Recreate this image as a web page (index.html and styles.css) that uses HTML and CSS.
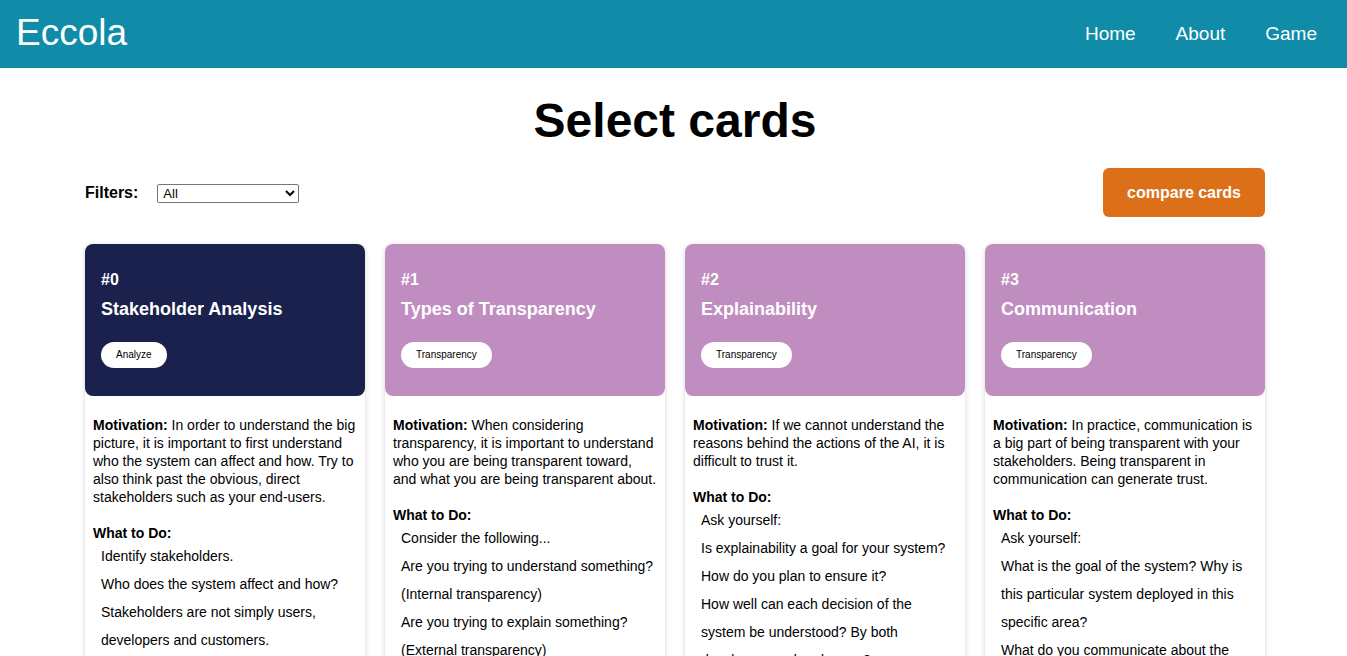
FILE: index.html
```html
<!DOCTYPE html>
<html lang="en">
<head>
<meta charset="utf-8">
<title>Eccola</title>
<link rel="stylesheet" href="styles.css">
</head>
<body>
<header class="topbar">
  <div class="logo">Eccola</div>
  <nav class="nav">
    <a href="#">Home</a>
    <a href="#">About</a>
    <a href="#">Game</a>
  </nav>
</header>
<main class="page">
  <h1 class="title">Select cards</h1>
  <div class="toolbar">
    <div class="filters">
      <label class="filters-label" for="f">Filters:</label>
      <select id="f" class="filter-select">
        <option>All</option>
        <option>Analyze</option>
        <option>Transparency</option>
      </select>
    </div>
    <button class="compare-btn">compare cards</button>
  </div>
  <div class="cards">
    <div class="card">
      <div class="card-head head-analyze">
        <div class="card-num">#0</div>
        <div class="card-title">Stakeholder Analysis</div>
        <span class="tag">Analyze</span>
      </div>
      <div class="card-body">
        <p class="motivation"><b>Motivation:</b> In order to understand the big picture, it is important to first understand who the system can affect and how. Try to also think past the obvious, direct stakeholders such as your end-users.</p>
        <div class="todo-title">What to Do:</div>
        <ul class="todo">
          <li>Identify stakeholders.</li>
          <li>Who does the system affect and how?</li>
          <li>Stakeholders are not simply users, developers and customers.</li>
          <li>Consider also indirect stakeholders.</li>
        </ul>
      </div>
    </div>
    <div class="card">
      <div class="card-head head-transparency">
        <div class="card-num">#1</div>
        <div class="card-title">Types of Transparency</div>
        <span class="tag">Transparency</span>
      </div>
      <div class="card-body">
        <p class="motivation"><b>Motivation:</b> When considering transparency, it is important to understand who you are being transparent toward, and what you are being transparent about.</p>
        <div class="todo-title">What to Do:</div>
        <ul class="todo">
          <li>Consider the following...</li>
          <li>Are you trying to understand something?</li>
          <li>(Internal transparency)</li>
          <li>Are you trying to explain something?</li>
          <li>(External transparency)</li>
        </ul>
      </div>
    </div>
    <div class="card">
      <div class="card-head head-transparency">
        <div class="card-num">#2</div>
        <div class="card-title">Explainability</div>
        <span class="tag">Transparency</span>
      </div>
      <div class="card-body">
        <p class="motivation"><b>Motivation:</b> If we cannot understand the reasons behind the actions of the AI, it is difficult to trust it.</p>
        <div class="todo-title">What to Do:</div>
        <ul class="todo">
          <li>Ask yourself:</li>
          <li>Is explainability a goal for your system?</li>
          <li>How do you plan to ensure it?</li>
          <li>How well can each decision of the system be understood? By both developers and end-users?</li>
        </ul>
      </div>
    </div>
    <div class="card">
      <div class="card-head head-transparency">
        <div class="card-num">#3</div>
        <div class="card-title">Communication</div>
        <span class="tag">Transparency</span>
      </div>
      <div class="card-body">
        <p class="motivation"><b>Motivation:</b> In practice, communication is a big part of being transparent with your stakeholders. Being transparent in communication can generate trust.</p>
        <div class="todo-title">What to Do:</div>
        <ul class="todo">
          <li>Ask yourself:</li>
          <li>What is the goal of the system? Why is this particular system deployed in this specific area?</li>
          <li>What do you communicate about the system to its users?</li>
        </ul>
      </div>
    </div>
  </div>
</main>
</body>
</html>
```
FILE: styles.css
```css
* { box-sizing: border-box; }
html, body { margin: 0; padding: 0; }
body {
  font-family: "Liberation Sans", Arial, sans-serif;
  color: #000;
  background: #fff;
}
.topbar {
  height: 68px;
  background: #108ca9;
  display: flex;
  align-items: center;
  justify-content: space-between;
  padding: 0 30px 0 16px;
  color: #fff;
}
.logo {
  font-size: 37px;
  line-height: 42px;
  margin-top: -2px;
}
.nav {
  display: flex;
  gap: 40px;
}
.nav a {
  color: #fff;
  text-decoration: none;
  font-size: 19px;
}
.page {
  padding: 0 82px 0 85px;
}
.title {
  margin: 25px 0 0;
  text-align: center;
  font-size: 48px;
  line-height: 56px;
  font-weight: bold;
}
.toolbar {
  margin-top: 19px;
  display: flex;
  justify-content: space-between;
  align-items: center;
}
.filters {
  display: flex;
  align-items: center;
  gap: 19px;
}
.filters-label {
  font-weight: bold;
  font-size: 16px;
}
.filter-select {
  width: 142px;
  height: 19px;
  font-family: "Liberation Sans", Arial, sans-serif;
  font-size: 13px;
  padding: 0 0 0 1px;
  border: 1px solid #767676;
  border-radius: 2px;
  background: #fff;
  margin-top: 2px;
}
.compare-btn {
  width: 162px;
  height: 49px;
  background: #dc7019;
  color: #fff;
  border: none;
  border-radius: 6px;
  font-family: "Liberation Sans", Arial, sans-serif;
  font-weight: bold;
  font-size: 16px;
}
.cards {
  margin-top: 27px;
  display: grid;
  grid-template-columns: repeat(4, 280px);
  gap: 20px;
}
.card {
  border-radius: 8px;
  background: #fff;
  box-shadow: 0 1px 5px rgba(0, 0, 0, 0.18);
}
.card-head {
  height: 152px;
  border-radius: 8px;
  padding: 27px 16px 0;
  color: #fff;
}
.head-analyze { background: #1b214d; }
.head-transparency { background: #c08dc1; }
.card-num {
  font-weight: bold;
  font-size: 16px;
  line-height: 18px;
}
.card-title {
  margin-top: 9px;
  font-weight: bold;
  font-size: 18px;
  line-height: 22px;
}
.tag {
  display: inline-block;
  margin-top: 22px;
  height: 26px;
  line-height: 26px;
  padding: 0 15px;
  background: #fff;
  color: #000;
  border-radius: 13px;
  font-size: 10px;
}
.card-body {
  padding: 20px 8px 8px;
  font-size: 14px;
  line-height: 18px;
}
.motivation {
  margin: 0 0 18px;
}
.todo-title {
  font-weight: bold;
}
.todo {
  list-style: none;
  margin: 0;
  padding: 0 0 0 8px;
}
.todo li {
  line-height: 28px;
}
```
